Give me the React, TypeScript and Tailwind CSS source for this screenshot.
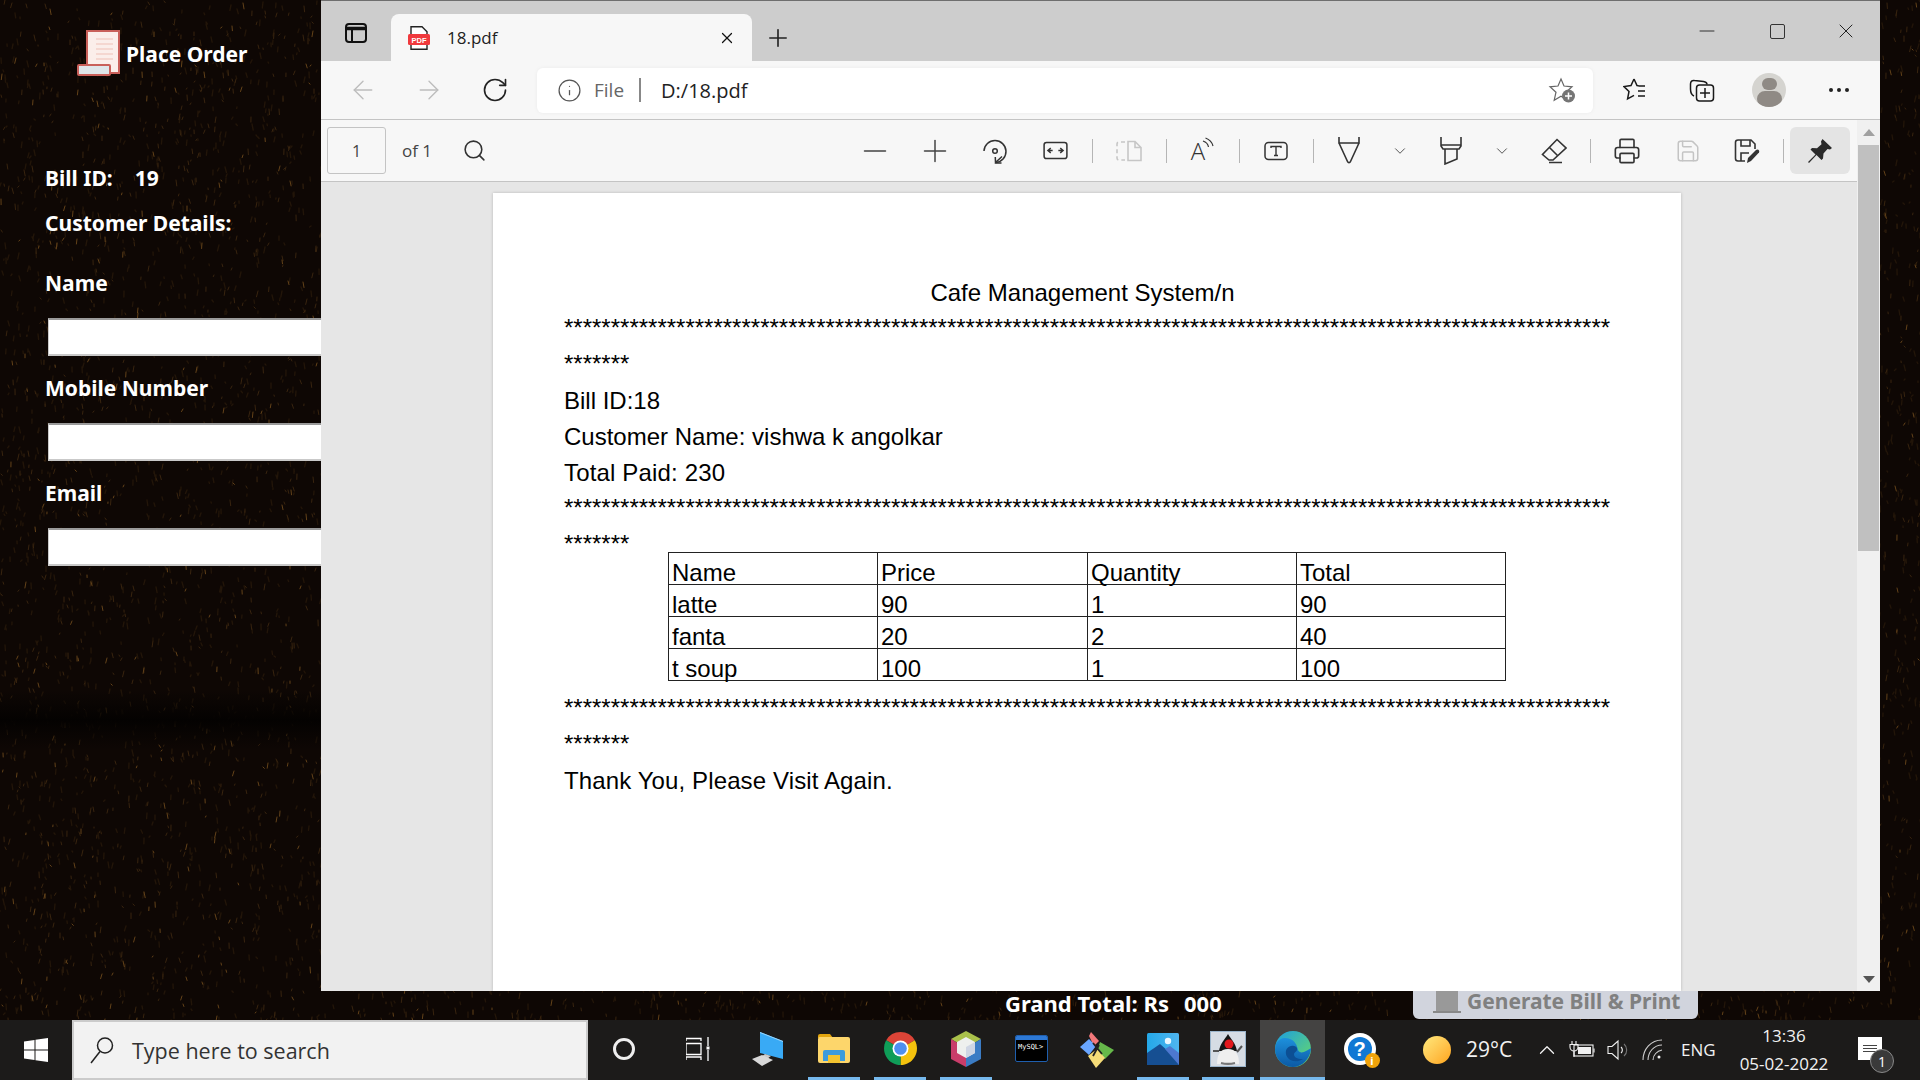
import React, { useMemo } from 'react';
import { ArrowLeft, ArrowRight, ChevronDown, ChevronUp, Info, Minus, Plus, Printer, RotateCw, Save, Search, X } from 'lucide-react';

const CHROME_FONT = 'font-["Open_Sans",sans-serif]';
const PANEL_FONT = 'font-["Noto_Sans",sans-serif] font-bold text-white';

// wood texture behind the form, seeded so it stays the same each render
const WoodTexture: React.FC = () => {
  const specks = useMemo(() => {
    let seed = 1234;
    const rnd = () => {
      seed = (seed * 16807) % 2147483647;
      return seed / 2147483647;
    };
    const build = (count: number) => {
      let d = '';
      for (let i = 0; i < count; i++) {
        const x = Math.round(rnd() * 1920);
        const y = Math.round(rnd() * 1020);
        d += `M${x} ${y}l${(rnd() * 3 - 1.5).toFixed(1)} ${(rnd() * 5 + 1).toFixed(1)}`;
      }
      return d;
    };
    return [build(9000), build(5000), build(1400)];
  }, []);

  return (
    <svg className="absolute inset-0" width="1920" height="1080" fill="none" strokeLinecap="round">
      <defs>
        <linearGradient id="woodBand" x1="0" y1="0" x2="0" y2="1">
          <stop offset="0" stopColor="#050302" stopOpacity="0" />
          <stop offset="0.5" stopColor="#040201" />
          <stop offset="1" stopColor="#050302" stopOpacity="0" />
        </linearGradient>
      </defs>
      <rect width="1920" height="1080" fill="#0e0704" />
      <path d={specks[0]} stroke="#221509" strokeWidth="1.4" />
      <path d={specks[1]} stroke="#38240f" strokeWidth="1" />
      <path d={specks[2]} stroke="#634219" strokeWidth="1" />
      <rect y="690" width="321" height="60" fill="url(#woodBand)" />
    </svg>
  );
};

const ReceiptIcon: React.FC = () => (
  <svg width="46" height="46" viewBox="0 0 46 46" fill="none">
    <rect x="11" y="1" width="32" height="42" fill="#fbeeea" stroke="#c9605a" strokeWidth="2" />
    <path d="M20 9h17M20 14h17M20 19h17M20 24h17M20 29h17" stroke="#f3cfc8" strokeWidth="1.5" />
    <rect x="2" y="35" width="32" height="10" rx="1" fill="#dfe6ea" stroke="#c9605a" strokeWidth="2" />
  </svg>
);

const FormField: React.FC<{ label: string; top: string }> = ({ label, top }) => (
  <div className={top}>
    <div className="text-[21px] leading-[28px]">{label}</div>
    <div className="mt-[21px] ml-[3px] h-[38px] bg-white border-t-2 border-t-[#9a9a9a] border-b-2 border-b-[#c9c9c9] border-l border-l-[#c9c9c9]" />
  </div>
);

const LeftPanel: React.FC = () => (
  <div className={`${PANEL_FONT} relative w-[321px] shrink-0 pl-[45px] overflow-hidden`}>
    <div className="flex items-center h-[46px] mt-[30px] ml-[31px] gap-[4px]">
      <ReceiptIcon />
      <span className="text-[21px] mt-[4px] whitespace-nowrap">Place Order</span>
    </div>
    <div className="mt-[88px] text-[21px] leading-[28px] whitespace-nowrap">
      Bill ID:<span className="ml-[22px]">19</span>
    </div>
    <div className="mt-[17px] text-[21px] leading-[28px]">Customer Details:</div>
    <FormField label="Name" top="mt-[32px]" />
    <FormField label="Mobile Number" top="mt-[18px]" />
    <FormField label="Email" top="mt-[18px]" />
  </div>
);

const TabIcon: React.FC = () => (
  <svg width="22" height="22" viewBox="0 0 22 22" fill="none" stroke="#111" strokeWidth="2">
    <rect x="1" y="2" width="20" height="18" rx="3" />
    <path d="M1 6.500h20" strokeWidth="3.500" />
    <path d="M7 7v13" />
  </svg>
);

const PdfFileIcon: React.FC = () => (
  <svg width="22" height="24" viewBox="0 0 22 24">
    <path d="M3 .8h11l5 5V23.2H3z" fill="#fff" stroke="#222" strokeWidth="1.4" />
    <rect y="8" width="22" height="11" rx="1.5" fill="#f0393d" />
    <text x="11" y="16.5" textAnchor="middle" fontSize="7.5" fontWeight="700" fill="#fff" fontFamily="Liberation Sans, sans-serif">PDF</text>
  </svg>
);

const TabStrip: React.FC = () => (
  <div className="flex items-end h-[61px] bg-[#cdcdcd] border-t border-t-[#6e6e6e]">
    <div className="flex items-center justify-center w-[70px] h-[47px] pb-[10px]">
      <TabIcon />
    </div>
    <div className={`${CHROME_FONT} flex items-center w-[361px] h-[47px] bg-[#f7f7f7] rounded-t-lg pl-[17px] pr-[16px]`}>
      <PdfFileIcon />
      <span className="ml-[17px] text-[17px] text-[#222]">18.pdf</span>
      <X size={18} strokeWidth={1.6} className="ml-auto text-[#111]" />
    </div>
    <div className="flex items-center justify-center w-[52px] h-[47px]">
      <Plus size={28} strokeWidth={1.4} className="text-[#222]" />
    </div>
    <div className="flex ml-auto h-[60px] items-center text-[#222]">
      <div className="w-[70px] flex justify-center"><Minus size={24} strokeWidth={0.9} /></div>
      <div className="w-[70px] flex justify-center"><div className="w-[15px] h-[15px] border border-[#333] rounded-[2px]" /></div>
      <div className="w-[68px] flex justify-center"><X size={24} strokeWidth={1} /></div>
    </div>
  </div>
);

const AddressBar: React.FC = () => (
  <div className={`${CHROME_FONT} flex items-center h-[59px] bg-[#f7f7f7] border-b border-b-[#c4c4c4]`}>
    <div className="flex w-[66px] ml-[9px] justify-center"><ArrowLeft size={30} strokeWidth={1.1} className="text-[#bdbdbd]" /></div>
    <div className="flex w-[66px] justify-center"><ArrowRight size={30} strokeWidth={1.1} className="text-[#bdbdbd]" /></div>
    <div className="flex w-[66px] justify-center"><RotateCw size={28} strokeWidth={1.4} className="text-[#222]" /></div>
    <div className="flex items-center w-[1056px] h-[45px] ml-[9px] bg-white rounded-md shadow-[0_0_4px_rgba(0,0,0,0.05)] pl-[20px] pr-[17px]">
      <Info size={25} strokeWidth={1.2} className="text-[#555]" />
      <span className="ml-[12px] mt-px text-[19px] text-[#666]">File</span>
      <div className="ml-[15px] mr-[20px] w-[2px] h-[24px] bg-[#888]" />
      <span className="mt-px text-[20px] text-[#222]">D:/18.pdf</span>
      <svg className="ml-auto" width="28" height="28" viewBox="0 0 28 28" fill="none">
        <path d="M13 3l3 7 8 .8-6 5.4 1.8 8-6.8-4-6.8 4 1.8-8-6-5.4 8-.8z" stroke="#666" strokeWidth="1.2" />
        <circle cx="20.5" cy="20" r="6.5" fill="#757575" />
        <path d="M20.5 16.5v7M17 20h7" stroke="#fff" strokeWidth="1.5" />
      </svg>
    </div>
    <div className="flex w-[70px] ml-[8px] justify-center">
      <svg width="26" height="26" viewBox="0 0 26 26" fill="none" stroke="#1a1a1a" strokeWidth="1.5">
        <path d="M11 2l3 6.6 1.500.2M22 9h-6.500M15 14h7M15 19h7M11 2L8 8.600 1 9.600l5 4.800-1.400 7.400 6.400-3.400" />
      </svg>
    </div>
    <div className="flex w-[62px] justify-center">
      <svg width="26" height="26" viewBox="0 0 26 26" fill="none" stroke="#1a1a1a" strokeWidth="1.5">
        <path d="M5 19C2.500 18 1.500 16 1.500 12V7c0-2.500 1.500-4 4-3.500l9 1c2 .3 3.500 1 3.500 3" />
        <rect x="7.500" y="8" width="17" height="16" rx="3" />
        <path d="M16 11v10M11 16h10" />
      </svg>
    </div>
    <div className="flex w-[72px] justify-center">
      <div className="relative w-[34px] h-[34px] rounded-full bg-[#d5d4d0] overflow-hidden flex flex-col items-center">
        <div className="w-[15px] h-[15px] mt-[5px] rounded-full bg-[#8f8a85]" />
        <div className="w-[25px] h-[20px] mt-[1px] rounded-full bg-[#8f8a85]" />
      </div>
    </div>
    <div className="flex w-[68px] justify-center gap-[4px]">
      <div className="w-[4px] h-[4px] rounded-full bg-[#222]" />
      <div className="w-[4px] h-[4px] rounded-full bg-[#222]" />
      <div className="w-[4px] h-[4px] rounded-full bg-[#222]" />
    </div>
  </div>
);

const Sep: React.FC = () => (
  <div className="flex justify-center w-[12px]"><div className="w-px h-[24px] bg-[#b5b5b5]" /></div>
);

const Slot: React.FC<{ w: string; children: React.ReactNode; box?: boolean }> = ({ w, children, box }) => (
  <div className={`flex items-center justify-center h-[47px] ${w} ${box ? 'bg-[#e4e4e4] rounded-md' : ''}`}>{children}</div>
);

const PdfToolbar: React.FC = () => (
  <div className={`${CHROME_FONT} flex items-center h-[62px] bg-[#f7f7f7] border-b border-b-[#c4c4c4] mr-[23px] pl-[6px]`}>
    <div className="flex items-center justify-center w-[59px] h-[47px] bg-[#f7f7f7] border border-[#c4c4c4] rounded-[3px] text-[16px] text-[#444]">1</div>
    <span className="ml-[16px] text-[17px] text-[#444]">of 1</span>
    <Search size={25} strokeWidth={1.5} className="ml-[30px] text-[#333] mt-[-1px]" />
    <div className="flex items-center ml-auto mr-[7px] text-[#333]">
      <Slot w="w-[60px]"><Minus size={36} strokeWidth={1} className="text-[#444]" /></Slot>
      <Slot w="w-[60px]"><Plus size={36} strokeWidth={1} className="text-[#444]" /></Slot>
      <Slot w="w-[60px]">
        <svg width="26" height="26" viewBox="0 0 26 26" fill="none" stroke="#333" strokeWidth="1.5">
          <path d="M2 13a11 11 0 1 1 12 11.500" />
          <path d="M20 18.500l-6.500 6-.2-5.500M13.500 25h6" />
          <circle cx="13" cy="13" r="2.300" />
        </svg>
      </Slot>
      <Slot w="w-[61px]">
        <svg width="25" height="19" viewBox="0 0 26 20" fill="none" stroke="#333" strokeWidth="1.6">
          <rect x="1" y="1.500" width="24" height="17" rx="2.500" />
          <path d="M10 10H5M8 7.500L5 10l3 2.500M16 10h5M18 7.500l3 2.500-3 2.500" strokeWidth="1.500" />
        </svg>
      </Slot>
      <Sep />
      <Slot w="w-[62px]">
        <svg width="26" height="22" viewBox="0 0 26 22" fill="none" stroke="#c6c6c6" strokeWidth="1.6">
          <path d="M9 2H3a2 2 0 0 0-2 2v14a2 2 0 0 0 2 2h6" strokeDasharray="4 3" />
          <path d="M12 1.500h7l6 6V20.500H12zM19 1.500v6h6" />
        </svg>
      </Slot>
      <Sep />
      <Slot w="w-[61px]">
        <div className="flex items-start">
          <span className="text-[24px] leading-[30px] font-light text-[#333]">A</span>
          <svg className="-ml-[3px] mt-[1px]" width="12" height="13" viewBox="0 0 12 13" fill="none" stroke="#333" strokeWidth="1.200">
            <path d="M1 4c3 1 5 3 5.500 6M3.500 1c4 1.500 6.500 4 7.500 8" />
          </svg>
        </div>
      </Slot>
      <Sep />
      <Slot w="w-[62px]">
        <svg width="24" height="20" viewBox="0 0 24 20" fill="none" stroke="#333" strokeWidth="1.5">
          <rect x="1" y="1.500" width="22" height="17" rx="3.500" />
          <path d="M7 7V5.500h10V7M12 5.500v9M10 14.500h4" strokeWidth="1.400" />
        </svg>
      </Slot>
      <Sep />
      <Slot w="w-[60px]">
        <svg width="24" height="28" viewBox="0 0 24 28" fill="none" stroke="#333" strokeWidth="1.6">
          <path d="M2 0v6h20V0M2 6l8.500 18.500c.7 1.500 2.300 1.500 3 0L22 6" />
        </svg>
      </Slot>
      <Slot w="w-[42px]"><ChevronDown size={18} strokeWidth={1.1} /></Slot>
      <Slot w="w-[60px]">
        <svg width="24" height="28" viewBox="0 0 24 28" fill="none" stroke="#333" strokeWidth="1.6">
          <path d="M2 0v9l2 3h16l2-3V0M2 8h20M6 12v15l12-5V12" />
        </svg>
      </Slot>
      <Slot w="w-[42px]"><ChevronDown size={18} strokeWidth={1.1} /></Slot>
      <Slot w="w-[61px]">
        <svg width="26" height="26" viewBox="0 0 26 26" fill="none" stroke="#333" strokeWidth="1.6">
          <path d="M16 1.500L25 10 12 22H8L1.500 16.500zM8 9l9 9M8 24.500h13" />
        </svg>
      </Slot>
      <Sep />
      <Slot w="w-[62px]"><Printer size={28} strokeWidth={1.4} /></Slot>
      <Slot w="w-[59px]"><Save size={26} strokeWidth={1.4} className="text-[#c4c4c4]" /></Slot>
      <Slot w="w-[60px]">
        <svg width="26" height="26" viewBox="0 0 26 26" fill="none" stroke="#333" strokeWidth="1.6">
          <path d="M11 23H4a2.500 2.500 0 0 1-2.500-2.500v-16A2.500 2.500 0 0 1 4 2h13l4 4v5" />
          <path d="M7 2v6h9V2M7 23v-8h8" />
          <path d="M13 25l1-5 8-8c2-1.500 4 .5 3 2.500l-8 8.500z" fill="#333" stroke="none" />
        </svg>
      </Slot>
      <Sep />
      <div className="w-px" />
      <Slot w="w-[60px]" box>
        <svg width="26" height="26" viewBox="0 0 26 26" fill="#2a2a2a">
          <path d="M15.500 1l9.500 9-2 1.500-2.500-.5-4 4.500-.5 5-1.500 1.500-5-5L2 25l-1-1 7.500-7.500-5-5L5 10l5 .2 4.500-4-.5-2.700z" />
        </svg>
      </Slot>
    </div>
  </div>
);

const STAR_LINE = '*'.repeat(112);
const STAR_TAIL = '*'.repeat(7);

const rows = [
  ['Name', 'Price', 'Quantity', 'Total'],
  ['latte', '90', '1', '90'],
  ['fanta', '20', '2', '40'],
  ['t soup', '100', '1', '100'],
];

const PdfPage: React.FC = () => (
  <div className='w-[1188px] h-[798px] mt-[11px] ml-[172px] bg-white pl-[71px] overflow-hidden font-["Liberation_Sans",sans-serif] text-[24px] text-black shadow-[0_0_3px_rgba(0,0,0,0.2)]'>
    <div className="w-[1045px] mt-[82px] h-[35px] leading-[36px] text-center pr-[8px]">Cafe Management System/n</div>
    <div className="leading-[36px] whitespace-nowrap">{STAR_LINE}</div>
    <div className="h-[37px] leading-[36px]">{STAR_TAIL}</div>
    <div className="leading-[36px]">Bill ID:18</div>
    <div className="leading-[36px]">Customer Name: vishwa k angolkar</div>
    <div className="h-[35px] leading-[36px] tracking-[0.16px]">Total Paid: 230</div>
    <div className="leading-[36px] whitespace-nowrap">{STAR_LINE}</div>
    <div className="leading-[24px] h-[26px] pt-[6px]">{STAR_TAIL}</div>
    <table className="border-collapse ml-[104px]">
      <tbody>
        {rows.map((row) => (
          <tr key={row[0]}>
            {row.map((cell, i) => (
              <td key={i} className={`${i === 1 ? 'w-[210px]' : 'w-[209px]'} p-0 border border-[#222]`}>
                <div className="h-[31px] leading-[40px] pl-[3px] whitespace-nowrap">{cell}</div>
              </td>
            ))}
          </tr>
        ))}
      </tbody>
    </table>
    <div className="mt-[9px] leading-[36px] whitespace-nowrap">{STAR_LINE}</div>
    <div className="h-[37px] leading-[36px]">{STAR_TAIL}</div>
    <div className="leading-[36px] tracking-[0.12px]">Thank You, Please Visit Again.</div>
  </div>
);

const Scrollbar: React.FC = () => (
  <div className="flex flex-col items-center w-[23px] h-[871px] -mt-[62px] bg-[#f0f0f0] relative">
    <div className="mt-[9px] w-0 h-0 border-x-[6px] border-x-transparent border-b-[7px] border-b-[#a0a0a0]" />
    <div className="mt-[9px] w-[21px] h-[406px] bg-[#c0c0c0]" />
    <div className="mt-auto mb-[8px] w-0 h-0 border-x-[6px] border-x-transparent border-t-[7px] border-t-[#555]" />
  </div>
);

const Browser: React.FC = () => (
  <div className="relative flex flex-col w-[1559px] h-[991px] shrink-0 overflow-hidden">
    <TabStrip />
    <AddressBar />
    <PdfToolbar />
    <div className="flex flex-1 bg-[#e6e6e6]">
      <div className="flex-1"><PdfPage /></div>
      <Scrollbar />
    </div>
  </div>
);

const BottomStrip: React.FC = () => (
  <div className={`${PANEL_FONT} relative flex h-[29px] pl-[1005px]`}>
    <div className="w-[408px] text-[22px] leading-[24px] whitespace-nowrap">
      Grand Total: Rs<span className="ml-[15px]">000</span>
    </div>
    <div className="flex w-[285px] h-[28px] bg-[#d1d4dd] rounded-b-md pl-[20px] text-[#808080]">
      <div className="flex flex-col items-center w-[28px]">
        <div className="w-[22px] h-[20px] bg-[#999]" />
        <div className="w-[28px] h-[2px] bg-[#888]" />
      </div>
      <span className="ml-[6px] text-[21px] leading-[20px] whitespace-nowrap">Generate Bill &amp; Print</span>
    </div>
  </div>
);

const TaskItem: React.FC<{ w: string; open?: boolean; active?: boolean; children: React.ReactNode }> = ({ w, open, active, children }) => (
  <div className={`flex flex-col items-center h-[60px] shrink-0 ${w} ${active ? 'bg-[#444342]' : ''}`}>
    <div className="flex flex-1 items-center justify-center">{children}</div>
    <div className={`h-[3px] ${active ? 'w-full' : 'w-[52px]'} ${open ? 'bg-[#76b9ed]' : ''}`} />
  </div>
);

const MyComputerIcon: React.FC = () => (
  <svg width="34" height="34" viewBox="0 0 34 34">
    <path d="M9 0l23 9v18L9 21z" fill="#39aaf5" />
    <path d="M9 0l23 9v1L9 1z" fill="#9ad6fb" />
    <path d="M14 22l6 2-4 3-6-2z" fill="#c9c9c9" />
    <path d="M1 27l10-4 11 5-11 6z" fill="#d8d8d8" />
  </svg>
);

const FolderIcon: React.FC = () => (
  <svg width="32" height="30" viewBox="0 0 32 30">
    <path d="M0 2a2 2 0 0 1 2-2h10l3 4H0z" fill="#e2a50e" />
    <rect y="3" width="32" height="26" rx="2" fill="#fdd66b" />
    <path d="M5 27V18a2 2 0 0 1 2-2h18a2 2 0 0 1 2 2v9h-5v-6H10v6z" fill="#3c9bdc" />
    <rect x="10" y="21" width="12" height="8" fill="#f4c430" />
  </svg>
);

const ChromeIcon: React.FC = () => (
  <svg width="33" height="33" viewBox="0 0 33 33">
    <path d="M16.500 16.500L2.200 8.300A16.500 16.500 0 0 1 30.800 8.300z" fill="#db4437" />
    <path d="M16.500 16.500L30.800 8.300A16.500 16.500 0 0 1 16.500 33z" fill="#f4c20d" />
    <path d="M16.500 16.500L16.500 33A16.500 16.500 0 0 1 2.200 8.300z" fill="#0f9d58" />
    <circle cx="16.500" cy="16.500" r="8" fill="#fff" />
    <circle cx="16.500" cy="16.500" r="6.300" fill="#4f8ff0" />
  </svg>
);

const NetbeansIcon: React.FC = () => (
  <svg width="32" height="36" viewBox="0 0 32 36">
    <path d="M16 0l15 8-15 9L1 8z" fill="#a9c14a" />
    <path d="M1 8l15 9v19L1 28z" fill="#c93d6a" />
    <path d="M31 8L16 17v19l15-8z" fill="#3b7cc4" />
    <path d="M16 6l9 5v11l-9 5-9-5V11z" fill="#eef0ee" />
    <path d="M16 16l9-5v11l-9 5z" fill="#cfd6e4" />
  </svg>
);

const MySqlIcon: React.FC = () => (
  <div className="flex flex-col w-[33px] h-[27px] bg-black border border-[#1f5fae] rounded-[2px] overflow-hidden">
    <div className="h-[4px] shrink-0 bg-[#2d79d6]" />
    <span className='font-["DejaVu_Sans_Mono",monospace] text-[7px] leading-[14px] text-white pl-[2px] whitespace-nowrap'>MySQL&gt;</span>
  </div>
);

const GitDiamondIcon: React.FC = () => (
  <svg width="36" height="38" viewBox="0 0 36 38">
    <path d="M12 2l8 9-5 5-5-10z" fill="#f2787a" />
    <path d="M10 9l7 7-7 9-9-8z" fill="#69a6ff" />
    <path d="M21 12l14 8-9 9-8-8z" fill="#66b84a" />
    <path d="M9 26l9-7 8 9-9 10z" fill="#f5dc78" />
    <path d="M14 13l9 11M20 15l-6 11" stroke="#222" strokeWidth="1.800" />
  </svg>
);

const PhotosIcon: React.FC = () => (
  <svg width="32" height="32" viewBox="0 0 32 32">
    <defs>
      <linearGradient id="photosSky" x1="0" y1="0" x2="1" y2="0"><stop offset="0" stopColor="#24a8e8" /><stop offset="1" stopColor="#4fb5f0" /></linearGradient>
    </defs>
    <rect width="32" height="32" rx="1.500" fill="url(#photosSky)" />
    <circle cx="21" cy="8" r="3.200" fill="#eaf7ff" />
    <path d="M0 32V20l13-9 19 17v4z" fill="#164f92" />
    <path d="M18 16l5-3 9 7v12z" fill="#4d78d0" />
  </svg>
);

const DukeIcon: React.FC = () => (
  <svg width="36" height="36" viewBox="0 0 36 36">
    <rect x=".5" y=".5" width="35" height="35" fill="#d6dce4" stroke="#9bb5cc" />
    <path d="M18 3c3 5 8 10 9 17H9c1-7 6-12 9-17z" fill="#161616" />
    <path d="M7 33c0-9 3-15 11-15s11 6 11 15z" fill="#efefef" />
    <path d="M11 32c4 1 10 1 14 0" stroke="#777" strokeWidth="2" fill="none" />
    <circle cx="19" cy="13" r="4.500" fill="#e2171c" />
    <path d="M9 20H3M27 21l5-6" stroke="#555" strokeWidth="2" />
  </svg>
);

const EdgeIcon: React.FC = () => (
  <svg width="36" height="36" viewBox="0 0 36 36">
    <defs>
      <linearGradient id="edgeTop" x1="0" y1="0" x2="1" y2="1"><stop offset="0" stopColor="#1b9de2" /><stop offset="1" stopColor="#6bdc63" /></linearGradient>
      <linearGradient id="edgeBody" x1="0" y1="0" x2="0" y2="1"><stop offset="0" stopColor="#1d90dc" /><stop offset="1" stopColor="#0c59a4" /></linearGradient>
    </defs>
    <circle cx="18" cy="18" r="18" fill="url(#edgeTop)" />
    <path d="M1 13c3-6 9-7 14-5 5 2 7 6 8 11 1 3 5 3 8 1 4-2 5-4 5-2-1 10-9 18-18 18C8 36 0 28 0 18z" fill="url(#edgeBody)" />
    <path d="M11 23c-1-5 3-9 8-8 3 .6 4 3 2.500 5-1 1.200-2.500 1.500-2.500 3.500 0 3 4 5 9 4.500-8 5-16 1-17-5z" fill="#0c4f94" />
  </svg>
);

const HelpIcon: React.FC = () => (
  <div className="relative flex items-center justify-center w-[32px] h-[32px] rounded-full bg-[#fff] ml-[2px]">
    <div className="flex items-center justify-center w-[24px] h-[24px] rounded-full bg-[#0f78d4] text-white font-bold text-[20px] font-['Liberation_Sans',sans-serif]">?</div>
    <div className="absolute -right-[4px] -bottom-[3px] flex items-center justify-center w-[15px] h-[15px] rounded-full bg-[#f0a30a] text-white font-bold text-[11px] leading-none">i</div>
  </div>
);

const SystemTray: React.FC = () => (
  <div className={`${CHROME_FONT} flex items-center flex-1 h-[60px] text-[#f2f2f2]`}>
    <div className="w-[28px] h-[28px] ml-[31px] rounded-full bg-gradient-to-br from-[#ffe97a] to-[#ffa40a]" />
    <span className="ml-[15px] w-[48px] text-[21px] whitespace-nowrap">29°C</span>
    <ChevronUp size={26} strokeWidth={1.2} className="ml-[20px]" />
    <svg className="ml-[9px]" width="26" height="20" viewBox="0 0 26 20" fill="none" stroke="#f2f2f2" strokeWidth="1.100">
      <rect x="5" y="5" width="19" height="11" />
      <rect x="9" y="7" width="13" height="7" fill="#f2f2f2" stroke="none" />
      <path d="M25 8.500v4M1 4.500h8v2.500a4 4 0 0 1-8 0zM3 1v3.500M7 1v3.500M5 11v6" />
    </svg>
    <svg className="ml-[12px]" width="24" height="22" viewBox="0 0 24 22" fill="none" stroke="#f2f2f2" strokeWidth="1.100">
      <path d="M1 7.500h4L11 2v18l-6-5.500H1zM14 8a4 4 0 0 1 0 6" />
      <path d="M17 5a8 8 0 0 1 0 12" stroke="#777" />
    </svg>
    <svg className="ml-[11px]" width="22" height="22" viewBox="0 0 22 22" fill="none" stroke="#cfcfcf" strokeWidth="1.100">
      <path d="M1 21C1 10 9 1 20 1M6 21C6 13 12 6 20 6M11 21c0-5 4-9 9-10" />
      <circle cx="17" cy="18" r="1.500" fill="#f2f2f2" stroke="none" />
    </svg>
    <span className="ml-[17px] text-[17px] w-[34px] whitespace-nowrap">ENG</span>
    <div className="flex flex-col items-center w-[122px] ml-[8px] text-[17px] leading-[28px]">
      <span>13:36</span>
      <span>05-02-2022</span>
    </div>
    <div className="relative ml-[13px] w-[24px] h-[23px] bg-white flex flex-col gap-[2px] items-center justify-center mt-[-3px]">
      <div className="w-[14px] h-px bg-[#444]" />
      <div className="w-[14px] h-px bg-[#444]" />
      <div className="w-[14px] h-px bg-[#444]" />
      <div className="absolute -right-[12px] -bottom-[13px] flex items-center justify-center w-[24px] h-[24px] rounded-full bg-[#3a3a3a] border border-[#888] text-white text-[14px]">1</div>
    </div>
  </div>
);

const Taskbar: React.FC = () => (
  <div className="relative flex h-[60px] bg-[#1c1b1a]">
    <div className="flex items-center justify-center w-[72px] shrink-0">
      <svg width="24" height="24" viewBox="0 0 24 24" fill="#fff">
        <path d="M0 3.400l10.500-1.500v9.600H0zM11.500 1.700L24 0v11.500H11.500zM0 12.500h10.500v9.600L0 20.600zM11.500 12.500H24V24l-12.500-1.700z" />
      </svg>
    </div>
    <div className={`${CHROME_FONT} flex items-center w-[516px] shrink-0 bg-[#f2f2f2] border-2 border-[#cbcbcb] pl-[16px]`}>
      <svg width="24" height="28" viewBox="0 0 24 28" fill="none" stroke="#222" strokeWidth="1.500">
        <circle cx="15" cy="9.500" r="7.500" />
        <path d="M10 15.500L1 27" />
      </svg>
      <span className="ml-[18px] mt-[3px] text-[21.5px] text-[#333]">Type here to search</span>
    </div>
    <TaskItem w="w-[72px]"><div className="w-[22px] h-[22px] rounded-full border-[3px] border-[#eee]" /></TaskItem>
    <TaskItem w="w-[75px]">
      <svg width="24" height="24" viewBox="0 0 24 24" fill="none" stroke="#fff" strokeWidth="1.300">
        <path d="M0 4V1.500h15V4M0 6.500h15v11H0zM0 23v-3h15v3M22 0v9M22 13v11" />
        <rect x="20.500" y="9.500" width="3" height="3" fill="#fff" stroke="none" />
      </svg>
    </TaskItem>
    <TaskItem w="w-[66px]"><MyComputerIcon /></TaskItem>
    <TaskItem w="w-[66px]" open><FolderIcon /></TaskItem>
    <TaskItem w="w-[66px]" open><ChromeIcon /></TaskItem>
    <TaskItem w="w-[66px]" open><NetbeansIcon /></TaskItem>
    <TaskItem w="w-[65px]"><MySqlIcon /></TaskItem>
    <TaskItem w="w-[66px]"><GitDiamondIcon /></TaskItem>
    <TaskItem w="w-[65px]" open><PhotosIcon /></TaskItem>
    <TaskItem w="w-[65px]" open><DukeIcon /></TaskItem>
    <TaskItem w="w-[65px]" open active><EdgeIcon /></TaskItem>
    <TaskItem w="w-[67px]"><HelpIcon /></TaskItem>
    <SystemTray />
  </div>
);

export default function App() {
  return (
    <div className="relative w-[1920px] h-[1080px] overflow-hidden">
      <WoodTexture />
      <div className="relative flex h-[991px]">
        <LeftPanel />
        <Browser />
      </div>
      <BottomStrip />
      <Taskbar />
    </div>
  );
}
